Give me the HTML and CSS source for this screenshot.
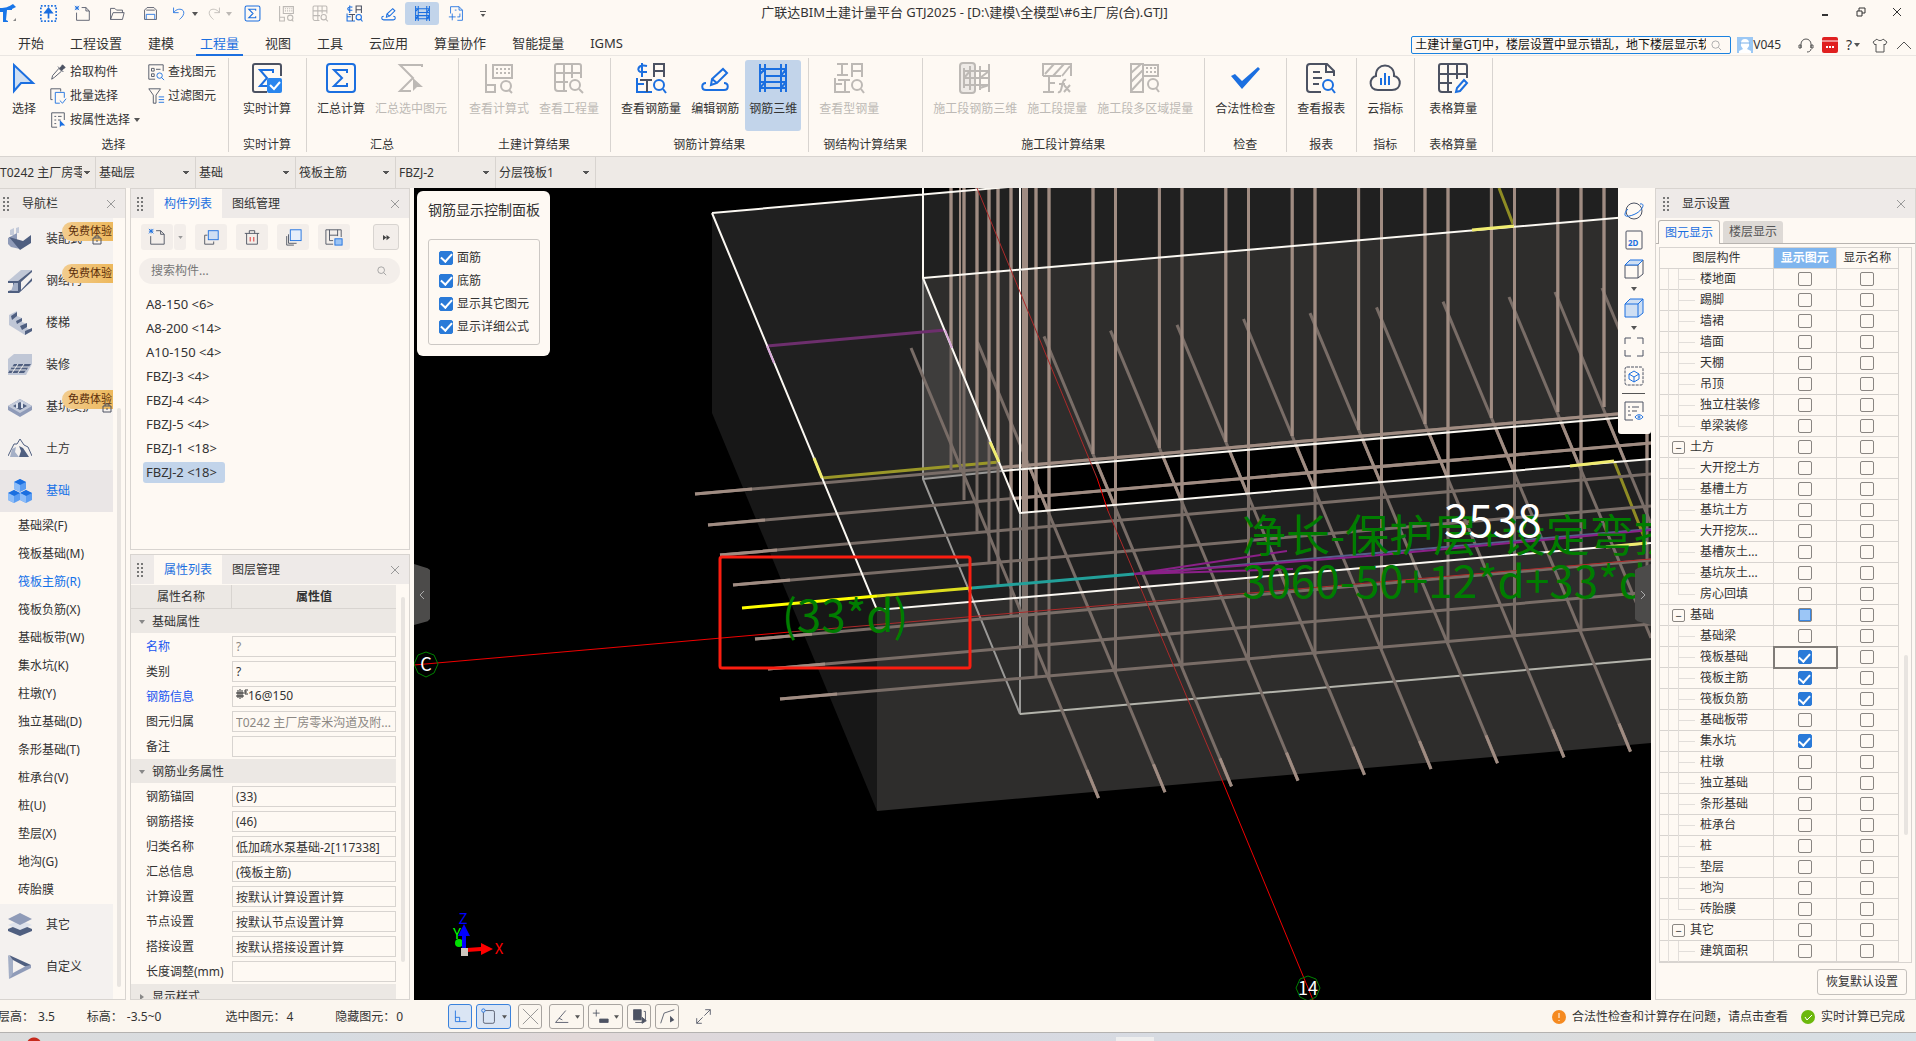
FILE: index.html
```html
<!DOCTYPE html>
<html lang="zh-CN">
<head>
  <meta charset="UTF-8">
  <meta name="viewport" content="width=device-width, initial-scale=1.0">
  <title>广联达BIM土建计量平台 GTJ2025</title>
  <link rel="stylesheet" href="styles.css">
</head>
<body>
  <!-- shared icons -->
  <svg class="sprite" aria-hidden="true">
    <symbol id="i-sum" viewBox="0 0 32 32"><rect x="2" y="2" width="28" height="28" rx="3"/><path d="M22 11V8H9l8 8-8 8h13v-3"/></symbol>
    <symbol id="i-formula" viewBox="0 0 32 32"><path d="M3 2v28h9v-7H3M10 3h19v13H10z"/><path d="M13 7h14M13 11h14" stroke-dasharray="2 2"/><circle cx="23" cy="24" r="5"/><path d="M26 28l3 3"/></symbol>
    <symbol id="i-grid" viewBox="0 0 32 32"><path d="M14 29H5a3 3 0 0 1-3-3V4a2 2 0 0 1 2-2h22a2 2 0 0 1 2 2v12M2 11h26M2 20h13M11 2v27M19 2v14"/><circle cx="22" cy="23" r="5"/><path d="M26 27l4 4"/></symbol>
    <symbol id="i-rebarqty" viewBox="0 0 32 32"><path d="M7 1v14M12 4C2 2 1 10 7 10h5M2 16v14h15M2 22h7"/><path class="dk" d="M19 15V2h10v13M19 9h10M12 18v12M5 18h12"/><circle cx="24" cy="23" r="5"/><path d="M28 27l3 4"/></symbol>
    <symbol id="i-edit" viewBox="0 0 32 32"><path d="M12 23l1-6L24 7l4 4-10 10-6 2zM13 17l5 4M7 21c-5 0-5 7 0 7h18c5 0 5-7 0-7"/></symbol>
    <symbol id="i-rebar3d" viewBox="0 0 32 32"><path d="M3 2v28M8 2v28M24 2v28M29 2v28M3 7h26M8 14h21M3 20h26M3 26h26M3 12l5-5M3 26l5-6M24 14l5-7M24 26l5-6"/></symbol>
    <symbol id="i-grip" viewBox="0 0 8 16"><path d="M1 1h2v2H1zM5 1h2v2H5zM1 5h2v2H1zM5 5h2v2H5zM1 9h2v2H1zM5 9h2v2H5zM1 13h2v2H1zM5 13h2v2H5z"/></symbol>
    <symbol id="i-x" viewBox="0 0 10 10"><path d="M1 1l8 8M9 1l-8 8"/></symbol>
    <symbol id="i-caret" viewBox="0 0 6 4"><path d="M0 0h6L3 4z"/></symbol>
    <symbol id="i-new" viewBox="0 0 20 20"><path d="M9 3h5l4 4v11H3V9M14 3v4h4"/><path class="bl" d="M1 1l5 5M6 1L1 6M1 3.5h5M3.5 1v5"/></symbol>
    <symbol id="i-lock" viewBox="0 0 10 11"><path d="M1 4h8v6H1zM3 4V2h4v2M5 6v2"/></symbol>
  </svg>

  <header class="titlebar">
    <svg class="logo" viewBox="0 0 16 18"><path d="M0 4c6 0 8-1 13-4l3 3-4 2v1l-5 0-1 10 2 1v1H3V8H0z" fill="#1976e8"/><path d="M16 14v3h-3z" fill="#888"/></svg>
    <div class="quick">
      <button aria-label="上传"><svg class="ic bl" viewBox="0 0 20 20"><rect x="1" y="1" width="18" height="18" stroke-width="2" stroke-dasharray="2 2"/><path d="M10 16V8M6 9l4-5 4 5z" fill="#1b6fe0" stroke-width="2"/></svg></button>
      <button aria-label="新建"><svg class="ic dk"><use href="#i-new"/></svg></button>
      <button aria-label="打开"><svg class="ic dk" viewBox="0 0 20 20"><path d="M3 17V4h5l2 2h7v3M3 17L6 9h13l-2 8z"/></svg></button>
      <button aria-label="保存"><svg class="ic dk" viewBox="0 0 20 20"><path d="M3 17V6l3-3h8l3 3v11zM5 6h10"/><path class="bl" d="M5 17v-6h10v6"/></svg></button>
      <button aria-label="撤销"><svg class="ic bl" viewBox="0 0 20 20"><path d="M3 3v6h6M3 9c4-6 13-5 12 1-1 4-3 5-5 7"/></svg><svg class="caret"><use href="#i-caret"/></svg></button>
      <button aria-label="恢复" class="off"><svg class="ic" viewBox="0 0 20 20"><path d="M17 3v6h-6M17 9C13 3 4 4 5 10c1 4 3 5 5 7"/></svg><svg class="caret"><use href="#i-caret"/></svg></button>
      <button aria-label="汇总计算"><svg class="ic bl"><use href="#i-sum"/></svg></button>
      <button aria-label="查看计算式" class="off"><svg class="ic"><use href="#i-formula"/></svg></button>
      <button aria-label="查看工程量" class="off"><svg class="ic"><use href="#i-grid"/></svg></button>
      <button aria-label="查看钢筋量"><svg class="ic bl"><use href="#i-rebarqty"/></svg></button>
      <button aria-label="编辑钢筋"><svg class="ic bl"><use href="#i-edit"/></svg></button>
      <button aria-label="钢筋三维" class="on"><svg class="ic bl"><use href="#i-rebar3d"/></svg></button>
      <button aria-label="导出"><svg class="ic bl" viewBox="0 0 20 20"><path d="M3 10V2h10l4 4v12h-6M13 2v4h4M1 14h8M5 10v8M8 6h2M14 10v4h-3"/></svg></button>
      <button aria-label="自定义" class="more"><svg class="caret"><use href="#i-caret"/></svg></button>
    </div>
    <h1>广联达BIM土建计量平台 GTJ2025 - [D:\建模\全模型\#6主厂房(合).GTJ]</h1>
    <div class="winctl">
      <button aria-label="最小化"><svg viewBox="0 0 10 10"><path d="M2 8h6" stroke-width="2"/></svg></button>
      <button aria-label="还原"><svg viewBox="0 0 10 10"><path d="M1 4h5v5H1zM3 4V1h6v5H6"/></svg></button>
      <button aria-label="关闭"><svg><use href="#i-x"/></svg></button>
    </div>
  </header>

  <nav class="tabs">
    <div class="tablist">
      <a href="#">开始</a><a href="#">工程设置</a><a href="#">建模</a><a href="#" class="active">工程量</a><a href="#">视图</a><a href="#">工具</a><a href="#">云应用</a><a href="#">算量协作</a><a href="#">智能提量</a><a href="#">IGMS</a>
    </div>
    <div class="account">
      <div class="help-search">
        <input type="text" aria-label="搜索帮助" value="土建计量GTJ中，楼层设置中显示错乱，地下楼层显示软件">
        <svg viewBox="0 0 12 12"><circle cx="5" cy="5" r="4"/><path d="M8 8l3 3"/></svg>
      </div>
      <svg class="avatar" viewBox="0 0 16 16"><path fill="#9cc8f4" d="M0 0h16v16H0z"/><path fill="#fff" d="M4 6a4 4 0 0 1 8 0v3l-2 3 4 2v2H2v-2l4-2-2-3z"/><path d="M3 6h10" stroke="#7ab0e8"/></svg>
      <span class="user">V045</span>
      <svg class="acc" viewBox="0 0 16 16"><path d="M3 11V7a5 5 0 0 1 10 0v4M1 8v3h2V8zM13 8v3h2V8zM13 12c0 2-2 3-4 3"/></svg>
      <svg class="acc" viewBox="0 0 16 16"><rect x="0" y="0" width="16" height="16" rx="2" fill="#e02020" stroke="none"/><path d="M0 4h16" stroke="#fff"/><path d="M4 10h8" stroke="#fff" stroke-width="2" stroke-dasharray="2 1"/></svg>
      <button class="help">?<svg class="caret"><use href="#i-caret"/></svg></button>
      <svg class="acc" viewBox="0 0 16 16"><path d="M5 2L1 5l2 3 1-1v8h8V7l1 1 2-3-4-3c-1 2-5 2-6 0z"/></svg>
      <svg class="acc" viewBox="0 0 16 16"><path d="M1 12l7-7 7 7"/></svg>
    </div>
  </nav>

  <section class="ribbon">
    <div class="group">
      <div class="tools">
        <button class="pick"><svg class="big bl" viewBox="0 0 32 32"><path d="M6 3v26l7-8h12z" fill="#cfdff3"/></svg>选择</button>
        <div class="stack">
          <button><svg class="ic dk" viewBox="0 0 20 20"><path d="M3 18l1-4 7-8 3 3-8 7z"/><path d="M10 4l6 6M12 6l3-4 3 3-4 3z" fill="#4c5262"/></svg>拾取构件</button>
          <button><svg class="ic bl" viewBox="0 0 20 20"><path class="dk" d="M4 14H2V2h11v3"/><path d="M17 12V6H7v12h5M12 15l3 3 4-5"/></svg>批量选择</button>
          <button><svg class="ic dk" viewBox="0 0 20 20"><path d="M9 18H3V2h14v8M6 6h2M10 6h4M6 10h2M10 10h3M6 14h2"/><path d="M12 10v8l2-2h4z" fill="#1b6fe0" stroke="none"/></svg>按属性选择<svg class="caret"><use href="#i-caret"/></svg></button>
        </div>
        <div class="stack">
          <button><svg class="ic dk" viewBox="0 0 20 20"><path d="M9 18H2V2h16v7M5 6h3v3H5zM10 7h5M5 12h3v3H5z"/><g class="bl"><circle cx="14" cy="14" r="3"/><path d="M16 16l3 3"/></g></svg>查找图元</button>
          <button><svg class="ic dk" viewBox="0 0 20 20"><path d="M2 2h13L10 9v9H7V9z"/><path class="bl" d="M13 11h6M13 14h6M13 17h6"/></svg>过滤图元</button>
        </div>
      </div>
      <p>选择</p>
    </div>
    <div class="group">
      <div class="tools mid"><button><svg class="big dk" viewBox="0 0 32 32"><path d="M16 30H4a2 2 0 0 1-2-2V4a2 2 0 0 1 2-2h24a2 2 0 0 1 2 2v10"/><path class="bl" d="M22 11V8H9l7 8-7 8h7"/><rect x="16" y="16" width="15" height="15" rx="2" fill="#2a86ee" stroke="none"/><path d="M19 23l4 4 6-7" stroke="#fff"/></svg>实时计算</button></div>
      <p>实时计算</p>
    </div>
    <div class="group">
      <div class="tools">
        <button><svg class="big bl"><use href="#i-sum"/></svg>汇总计算</button>
        <button class="off"><svg class="big" viewBox="0 0 32 32"><path d="M27 5V3H5l13 13L5 29h11"/><path d="M18 16v13l4-4h6z" fill="#bdb9b5" stroke="none"/></svg>汇总选中图元</button>
      </div>
      <p>汇总</p>
    </div>
    <div class="group">
      <div class="tools">
        <button class="off"><svg class="big"><use href="#i-formula"/></svg>查看计算式</button>
        <button class="off"><svg class="big"><use href="#i-grid"/></svg>查看工程量</button>
      </div>
      <p>土建计算结果</p>
    </div>
    <div class="group">
      <div class="tools">
        <button><svg class="big bl"><use href="#i-rebarqty"/></svg>查看钢筋量</button>
        <button><svg class="big bl"><use href="#i-edit"/></svg>编辑钢筋</button>
        <button class="on"><svg class="big bl"><use href="#i-rebar3d"/></svg>钢筋三维</button>
      </div>
      <p>钢筋计算结果</p>
    </div>
    <div class="group">
      <div class="tools"><button class="off"><svg class="big" viewBox="0 0 32 32"><path d="M4 2h11M4 13h11M9 2v11M2 16v14h15M2 22h7M12 18v12M5 18h12M19 15V2h10v13M19 9h10"/><circle cx="24" cy="23" r="5"/><path d="M28 27l3 4"/></svg>查看型钢量</button></div>
      <p>钢结构计算结果</p>
    </div>
    <div class="group">
      <div class="tools">
        <button class="off"><svg class="big" viewBox="0 0 32 32"><rect x="1" y="1" width="15" height="30" rx="3" fill="#eeeae6"/><path d="M5 6v20M11 4v24M21 4v24M30 2v28M5 9h25M5 16h25M5 23h25M5 16l6-7M21 16l9-7M21 26l9-3"/></svg>施工段钢筋三维</button>
        <button class="off"><svg class="big" viewBox="0 0 32 32"><path d="M2 14V2h28v12M2 14h18M4 12L13 2M12 14L23 2M21 14l8-10M8 14v16M2 30h11M8 21h6M17 30c5 2 3-14 8-12M18 22h6M23 23l6 7M29 23l-6 7"/></svg>施工段提量</button>
        <button class="off"><svg class="big" viewBox="0 0 32 32"><path d="M14 30H2V2h12zM2 11l10-9M2 20L14 8M2 29l12-13M14 3h15v11H14"/><path d="M17 6h12M17 10h12" stroke-dasharray="2 2"/><circle cx="24" cy="22" r="5"/><path d="M27 26l3 4"/></svg>施工段多区域提量</button>
      </div>
      <p>施工段计算结果</p>
    </div>
    <div class="group">
      <div class="tools"><button><svg class="big" viewBox="0 0 32 32"><path d="M2 14l4-2 7 7L29 5l2 2-18 20z" fill="#1b6fe0" stroke="none"/></svg>合法性检查</button></div>
      <p>检查</p>
    </div>
    <div class="group">
      <div class="tools"><button><svg class="big dk" viewBox="0 0 32 32"><path d="M16 30H5a3 3 0 0 1-3-3V5a3 3 0 0 1 3-3h17l7 7v5M21 2v8h8M8 10h7M8 16h9M8 22h6"/><g class="bl"><circle cx="23" cy="23" r="5"/><path d="M27 27l3 4"/></g></svg>查看报表</button></div>
      <p>报表</p>
    </div>
    <div class="group">
      <div class="tools"><button><svg class="big dk" viewBox="0 0 32 32"><path d="M9 28C-1 28 0 15 7 14 6 0 26 0 25 14c8 1 8 14-2 14z"/><path class="bl" d="M12 16v7M16 11v12M20 14v9"/></svg>云指标</button></div>
      <p>指标</p>
    </div>
    <div class="group">
      <div class="tools mid"><button><svg class="big dk" viewBox="0 0 32 32"><path d="M15 30H5a3 3 0 0 1-3-3V4a2 2 0 0 1 2-2h24a2 2 0 0 1 2 2v12M2 12h28M2 21h13M11 2v28M20 2v15"/><path class="bl" d="M19 30l1-4 7-8 3 3-7 8z"/></svg>表格算量</button></div>
      <p>表格算量</p>
    </div>
  </section>

  <div class="combos">
    <select class="first" aria-label="工程"><option>T0242 主厂房零米沟道及附属</option></select>
    <select aria-label="楼层"><option>基础层</option></select>
    <select aria-label="类别"><option>基础</option></select>
    <select aria-label="构件类型"><option>筏板主筋</option></select>
    <select aria-label="构件"><option>FBZJ-2</option></select>
    <select aria-label="分层"><option>分层筏板1</option></select>
  </div>

  <main class="work">
    <aside class="panel navpanel">
      <div class="head"><svg class="grip"><use href="#i-grip"/></svg><h2>导航栏</h2><button class="close" aria-label="关闭导航栏"><svg><use href="#i-x"/></svg></button></div>
      <div class="navwrap">
        <div class="navlist">
          <button class="cat"><svg viewBox="0 0 24 24"><path fill="#8f9bb8" d="M0 11l9-5v10l3 6-9-2-3-3z"/><path fill="#4f5f80" d="M1 10l14 4 8-6v8l-11 7z"/><path fill="#c3cad9" d="M2 3l4-2v7H2zM8 1l3-1v6H8z"/></svg>装配式<em>免费体验</em><svg class="lock"><use href="#i-lock"/></svg></button>
          <button class="cat"><svg viewBox="0 0 24 24"><path fill="#c0c7d6" d="M0 12L13 1h11L10 12z"/><path fill="#4f5f80" d="M10 12L24 1v2L13 13v8L24 9v3L11 24H0v-2l5-1v-7H0v-2z"/><path fill="#a4afc6" d="M6 14h4v8H3z"/></svg>钢结构<em>免费体验</em></button>
          <button class="cat"><svg viewBox="0 0 24 24"><path fill="#c0c7d6" d="M1 4l8-4v5l5 2v4l5 2v4l5 3-7 4L1 14z"/><path fill="#4f5f80" d="M3 5l6-4v4l-5 4zM8 10l6-3v3l-5 3zM12 15l7-3v4l-5 3zM17 20l7-3v3l-7 4z"/></svg>楼梯</button>
          <button class="cat"><svg viewBox="0 0 24 24"><path fill="#c0c7d6" d="M0 6l6-5h18v10l-6 11H0z"/><path fill="#4f5f80" d="M6 11h17l-7 9H0z"/><path d="M4 14h17M2 17h16M10 11l-6 9M16 11l-6 9" stroke="#eee" fill="none"/></svg>装修</button>
          <button class="cat"><svg viewBox="0 0 24 24"><path fill="#8f9bb8" d="M0 11l12-7 12 7v4l-12 7-12-7z"/><path fill="#c3cad9" d="M0 11l12-7 12 7-12 7z"/><path fill="#4f5f80" d="M5 11l7-4 7 4-7 4z"/><path fill="#dde2ec" d="M8 8h2v5H8zM13 7h2v6h-2z"/></svg>基坑支护<em>免费体验</em><svg class="lock far"><use href="#i-lock"/></svg></button>
          <button class="cat"><svg viewBox="0 0 24 24"><path d="M0 19l6-12h3l3-5 4 6 4 2 4 9" fill="none" stroke="#4f5f80"/><path fill="#4f5f80" d="M11 9l4 2 6 9H11l2-6z"/><path fill="#a4afc6" d="M4 12l4-2-1 5 4 5H2z"/></svg>土方</button>
          <button class="cat sel"><svg viewBox="0 0 24 24"><path fill="#5b9df2" d="M6 3l6-3 6 3v7l-6 3-6-3zM0 14l6-3 6 3v7l-6 3-6-3zM12 14l6-3 6 3v7l-6 3-6-3z"/><path fill="#1b6fe0" d="M6 3l6-3 6 3-6 3zM0 14l6-3 6 3-6 3zM12 14l6-3 6 3-6 3z"/><path fill="#8dbcf7" d="M6 3l6 3v7l-6-3zM0 14l6 3v7l-6-3zM12 14l6 3v7l-6-3z"/></svg>基础</button>
          <ul>
            <li>基础梁(F)</li><li>筏板基础(M)</li><li class="sel">筏板主筋(R)</li><li>筏板负筋(X)</li><li>基础板带(W)</li><li>集水坑(K)</li><li>柱墩(Y)</li><li>独立基础(D)</li><li>条形基础(T)</li><li>桩承台(V)</li><li>桩(U)</li><li>垫层(X)</li><li>地沟(G)</li><li>砖胎膜</li>
          </ul>
          <button class="cat"><svg viewBox="0 0 24 24"><path fill="#4f5f80" d="M0 16l12-5 12 5v2l-12 5-12-5z"/><path fill="#dfe3ec" d="M0 12l12-5 12 5-12 5z"/><path fill="#8f9bb8" d="M0 6l12-6 12 6-12 6z"/></svg>其它</button>
          <button class="cat"><svg viewBox="0 0 24 24"><path fill="#a4afc6" d="M0 0l5 4v15l-4 5z"/><path fill="#4f5f80" d="M1 0l22 10-3 3L5 5z"/><path fill="#8f9bb8" d="M23 10v3L1 24l4-6 13-7z"/></svg>自定义</button>
        </div>
        <div class="bar navbar"></div>
      </div>
    </aside>

    <div class="middle">
      <section class="panel complist">
        <div class="head"><svg class="grip"><use href="#i-grip"/></svg><button class="tab active">构件列表</button><button class="tab">图纸管理</button><button class="close" aria-label="关闭构件列表"><svg><use href="#i-x"/></svg></button></div>
        <div class="toolrow">
          <div class="split"><button aria-label="新建构件"><svg class="ic dk"><use href="#i-new"/></svg></button><button class="drop" aria-label="更多新建"><svg class="caret"><use href="#i-caret"/></svg></button></div>
          <button aria-label="复制"><svg class="ic dk" viewBox="0 0 20 20"><path d="M6 8H3v10h10v-3"/><rect class="bl" x="7" y="3" width="11" height="10" fill="#cfdff3"/></svg></button>
          <button aria-label="删除"><svg class="ic dk" viewBox="0 0 20 20"><path d="M2 6h16M4 6v12h12V6M7 6V3h6v3"/><path d="M8 10v5M12 10v5" stroke="#d22"/></svg></button>
          <button aria-label="层间复制"><svg class="ic dk" viewBox="0 0 20 20"><path d="M5 7v10h9M3 9v10h8"/><rect class="bl" x="7" y="2" width="12" height="12" fill="#e6eefa"/></svg></button>
          <button aria-label="存档"><svg class="ic dk" viewBox="0 0 20 20"><path d="M9 18H1V2h17v8M5 2v12M14 2v7M5 8h9M5 14h4"/><rect class="bl" x="11" y="12" width="8" height="7" fill="#9cc4f4"/></svg></button>
          <button class="expand" aria-label="展开"><svg viewBox="0 0 10 8"><path d="M1 1v6l4-3zM5 1v6l4-3z" fill="#444"/></svg></button>
        </div>
        <div class="search"><input type="text" placeholder="搜索构件..." aria-label="搜索构件"><svg viewBox="0 0 12 12"><circle cx="5" cy="5" r="4"/><path d="M8 8l3 3"/></svg></div>
        <ul class="items">
          <li>A8-150 &lt;6&gt;</li><li>A8-200 &lt;14&gt;</li><li>A10-150 &lt;4&gt;</li><li>FBZJ-3 &lt;4&gt;</li><li>FBZJ-4 &lt;4&gt;</li><li>FBZJ-5 &lt;4&gt;</li><li>FBZJ-1 &lt;18&gt;</li><li class="sel">FBZJ-2 &lt;18&gt;</li>
        </ul>
      </section>
      <section class="panel props">
        <div class="head"><svg class="grip"><use href="#i-grip"/></svg><button class="tab active">属性列表</button><button class="tab">图层管理</button><button class="close" aria-label="关闭属性列表"><svg><use href="#i-x"/></svg></button></div>
        <div class="propwrap">
          <div class="proplist">
            <div class="prophead"><span>属性名称</span><b>属性值</b></div>
            <h3><svg class="caret"><use href="#i-caret"/></svg>基础属性</h3>
            <div class="row key"><label for="p1">名称</label><input id="p1" class="dim" value="?"></div>
            <div class="row"><label for="p2">类别</label><input id="p2" value="?"></div>
            <div class="row key"><label for="p3">钢筋信息</label><div class="field"><svg viewBox="0 0 12 12"><path d="M4 0v10M2 1v8M6 1v8M0 4h8M0 7h8" stroke="#333" fill="none"/><path d="M12 1H9v4h3M9 3h2" stroke="#333" fill="none"/></svg><input id="p3" value="16@150"></div></div>
            <div class="row"><label for="p4">图元归属</label><input id="p4" class="dim" value="T0242 主厂房零米沟道及附..."></div>
            <div class="row"><label for="p5">备注</label><input id="p5"></div>
            <h3><svg class="caret"><use href="#i-caret"/></svg>钢筋业务属性</h3>
            <div class="row"><label for="p6">钢筋锚固</label><input id="p6" value="(33)"></div>
            <div class="row"><label for="p7">钢筋搭接</label><input id="p7" value="(46)"></div>
            <div class="row"><label for="p8">归类名称</label><input id="p8" value="低加疏水泵基础-2[117338]"></div>
            <div class="row"><label for="p9">汇总信息</label><input id="p9" value="(筏板主筋)"></div>
            <div class="row"><label for="p10">计算设置</label><input id="p10" value="按默认计算设置计算"></div>
            <div class="row"><label for="p11">节点设置</label><input id="p11" value="按默认节点设置计算"></div>
            <div class="row"><label for="p12">搭接设置</label><input id="p12" value="按默认搭接设置计算"></div>
            <div class="row"><label for="p13">长度调整(mm)</label><input id="p13"></div>
            <h3 class="shut"><svg class="caret"><use href="#i-caret"/></svg>显示样式</h3>
          </div>
          <div class="bar propbar"></div>
        </div>
      </section>
    </div>

    <section class="view">
      <svg class="scene" viewBox="414 188 1237 812" preserveAspectRatio="xMinYMin slice">
        <clipPath id="above"><path d="M923 188V278L1020 513L1651 459V188z"/></clipPath>
        <clipPath id="gap"><path d="M1002 471L1651 415V459L1020 513z"/></clipPath>
        <!-- slab faces -->
        <path class="face" fill="#171717" d="M712 213L877 610V811L712 413z"/>
        <path class="face" fill="#202020" d="M712 213L1008 187H1651V543L877 610z"/>
        <path class="face" fill="#2e2d2c" d="M877 610L1651 543V743L877 811z"/>
        <path class="face" fill="#2e2d2c" d="M923 278L1651 215V415L1002 471z"/>
        <path class="face" fill="#3e3d3c" d="M923 278L1002 471L923 479z"/>
        <path class="face" fill="#000" d="M1002 471L1651 415V459L1020 513z"/>
        <g fill="none" stroke-width="2">
          <path stroke="#9a9997" d="M923 278V479L1020 714V513M923 479L1002 471"/>
          <path stroke="#b4b4ac" d="M1020 714L1651 659"/>
          <path stroke="#6d2f6d" stroke-width="3" d="M767 346L945 330"/>
          <path stroke="#9a9728" stroke-width="3" d="M822 478L999 462"/>
          <path stroke="#8f8c24" stroke-width="3" d="M1499 188L1513 224M1614 461L1646 542"/>
        </g>
        <!-- rebar, filled in by script.js -->
        <g id="rebar-dim" stroke="#796d67" stroke-width="3"></g>
        <g id="rebar-lit" stroke="#a08c82" stroke-width="3"></g>
        <g id="rebar-above" stroke="#a08c82" stroke-width="3" clip-path="url(#above)"></g>
        <g id="rebar-gap" stroke="#a08c82" stroke-width="3" clip-path="url(#gap)"></g>
        <g fill="none" stroke="#fbf8f2" stroke-width="2">
          <path d="M712 213L877 610L1651 543M712 213L1008 187M923 188V278L1020 513L1651 459M923 278L1651 215M1002 471L1651 415M1020 188V513"/>
          <path stroke="#f0ec70" d="M814 458L822 478M990 442L999 462" stroke-width="3"/>
          <path stroke="#f0ec70" d="M1472 230L1514 226M1570 466L1614 461M1606 547L1647 543" stroke-width="3"/>
          <path stroke="#d8a8d8" d="M767 346L774 363M945 330L952 348"/>
        </g>
        <!-- grid axes -->
        <g fill="none" stroke="#f00000">
          <path d="M414 665L790 632M1097 478L1108 511M1222 780L1313 1000"/>
          <path stroke="#ad2a2a" d="M790 632L1651 559M977 188L1097 478M1108 511L1222 780"/>
        </g>
        <!-- selected bar -->
        <g fill="none" stroke-width="3">
          <path stroke="#ffff00" d="M742 608L877 596"/>
          <path stroke="#dede20" d="M877 596L972 588"/>
          <path stroke="#22a09a" d="M972 588L1134 574"/>
          <path stroke="#56608c" stroke-width="2" d="M1134 574L1651 529"/>
          <path stroke="#8a2088" stroke-width="2" d="M1287 551L1134 574L1293 569M1134 574L1380 555L1651 530"/>
        </g>
        <g class="dims">
          <text x="782" y="632">(33*d)</text>
          <text x="1242" y="552">净长-保护层+设定弯折</text>
          <text x="1242" y="598">3060-50+12*d+33*d</text>
          <text class="white" x="1444" y="537">3538</text>
        </g>
        <rect x="720" y="557" width="250" height="111" rx="2" fill="none" stroke="#fb1d10" stroke-width="3"/>
        <g class="axis">
          <path d="M426 652l8 3 4 9-4 9-8 4-8-4-4-9 4-9zM1308 976l8 3 4 9-4 9-8 4-8-4-4-9 4-9z"/>
          <text x="426" y="671">C</text><text x="1308" y="995">14</text>
        </g>
        <g class="gizmo">
          <circle cx="459" cy="943" r="4" fill="#00e000"/>
          <path fill="#00f" d="M462 949V936h-4l6-12 6 12h-4v13z"/>
          <path fill="#f00" d="M467 948l14-1v-4l12 6-12 6v-4l-14 1z"/>
          <path fill="#ccc6be" d="M461 948h7v8h-7z"/>
          <text x="463" y="924" fill="#00f">Z</text><text x="457" y="939" fill="#0f0">Y</text><text x="499" y="954" fill="#f00">X</text>
        </g>
      </svg>
      <div class="ctrl">
        <h2>钢筋显示控制面板</h2>
        <fieldset>
          <label><input type="checkbox" checked>面筋</label>
          <label><input type="checkbox" checked>底筋</label>
          <label><input type="checkbox" checked>显示其它图元</label>
          <label><input type="checkbox" checked>显示详细公式</label>
        </fieldset>
      </div>
      <button class="handle left" aria-label="收起左侧"><svg viewBox="0 0 6 10"><path d="M5 1L1 5l4 4"/></svg></button>
      <button class="handle right" aria-label="收起右侧"><svg viewBox="0 0 6 10"><path d="M1 1l4 4-4 4"/></svg></button>
      <div class="viewtools">
        <button aria-label="动态观察"><svg class="ic dk" viewBox="0 0 20 20"><circle cx="10" cy="10" r="8"/><path class="bl" d="M16 3c6-1 2 6-3 9S0 17 1 13c0-2 2-4 3-5"/></svg></button>
        <button aria-label="二维"><svg class="ic dk" viewBox="0 0 20 20"><rect x="2" y="1" width="16" height="18" rx="1"/><text x="4" y="16">2D</text></svg></button>
        <button class="menu" aria-label="俯视"><svg class="ic dk" viewBox="0 0 20 20"><path d="M1 6h13v13H1zM14 19l5-4V1"/><path class="bl" d="M1 6l5-5h13l-5 5z" fill="#cfdff3"/></svg><svg class="caret"><use href="#i-caret"/></svg></button>
        <button class="menu" aria-label="实体"><svg class="ic bl" viewBox="0 0 20 20"><path d="M1 6l5-5h13v14l-5 4H1zM1 6h13v13M14 6l5-5" fill="#cfdff3"/></svg><svg class="caret"><use href="#i-caret"/></svg></button>
        <button aria-label="全屏"><svg class="ic dk" viewBox="0 0 20 20"><path d="M1 7V1h6M13 1h6v6M19 13v6h-6M7 19H1v-6"/></svg></button>
        <button aria-label="局部三维"><svg class="ic dk" viewBox="0 0 20 20"><rect x="1" y="1" width="18" height="18" rx="2" stroke-dasharray="3 1"/><path class="bl" d="M10 5l5 3v5l-5 3-5-3V8zM5 8l5 3 5-3M10 11v5"/></svg></button>
        <hr>
        <button aria-label="显示设置"><svg class="ic dk" viewBox="0 0 20 20"><path d="M9 19H1V1h18v10M4 6h2M8 6h7M4 10h2M8 10h5M4 14h3"/><path class="bl" d="M11 16c2-3 6-3 8 0-2 3-6 3-8 0z"/><circle class="bl" cx="15" cy="16" r="1"/></svg></button>
      </div>
    </section>

    <aside class="panel display">
      <div class="head"><svg class="grip"><use href="#i-grip"/></svg><h2>显示设置</h2><button class="close" aria-label="关闭显示设置"><svg><use href="#i-x"/></svg></button></div>
      <div class="subtabs"><button class="active">图元显示</button><button>楼层显示</button></div>
      <div class="layers">
        <table>
          <thead><tr><th>图层构件</th><th class="hl">显示图元</th><th>显示名称</th></tr></thead>
          <tbody id="layer-rows"></tbody>
        </table>
        <div class="bar layerbar"></div>
      </div>
      <button class="reset">恢复默认设置</button>
    </aside>
  </main>

  <footer class="status">
    <div class="facts"><span>层高：</span><span class="num">3.5</span><span>标高：</span><span class="num wide">-3.5~0</span><span>选中图元：</span><span class="num count">4</span><span>隐藏图元：</span><span class="num">0</span></div>
    <div class="snap">
      <button class="on" aria-label="正交"><svg class="ic bl" viewBox="0 0 20 20"><path d="M4 3v13h13M4 11h5v5"/></svg></button>
      <button class="on two" aria-label="捕捉"><svg class="ic dk" viewBox="0 0 20 20"><rect x="4" y="3" width="13" height="15" rx="2"/><circle class="bl" cx="4" cy="3" r="2" fill="#d6e2f3"/></svg><svg class="caret"><use href="#i-caret"/></svg></button>
      <button class="gap" aria-label="交点"><svg class="ic" viewBox="0 0 20 20"><path d="M1 1l18 18M19 1L1 19" stroke="#888"/></svg></button>
      <button class="two gap" aria-label="角度"><svg class="ic dk" viewBox="0 0 20 20"><path d="M3 17L15 3M3 17h15M7 12l4 2"/></svg><svg class="caret"><use href="#i-caret"/></svg></button>
      <button class="two" aria-label="偏移"><svg class="ic dk" viewBox="0 0 20 20"><path d="M1 6h8M5 2v8"/><path d="M9 13h10v4H9z" fill="#4c5262"/></svg><svg class="caret"><use href="#i-caret"/></svg></button>
      <button aria-label="选择图元"><svg class="ic dk" viewBox="0 0 20 20"><path d="M3 2h9v12H3z" fill="#4c5262"/><path d="M5 17h8M15 4h2v10"/><path d="M13 11v7l5-3z" fill="#4c5262"/></svg></button>
      <button aria-label="折线"><svg class="ic dk" viewBox="0 0 20 20"><path d="M2 18L6 6l12-4"/><path d="M13 9v8l5-3z" fill="#4c5262" stroke="none"/></svg></button>
      <button class="bare" aria-label="全屏显示"><svg class="ic dk" viewBox="0 0 20 20"><path d="M12 2h6v6M18 2l-7 7M8 18H2v-6M2 18l7-7"/></svg></button>
    </div>
    <div class="notes">
      <svg viewBox="0 0 14 14"><circle cx="7" cy="7" r="7" fill="#f58a20"/><path d="M7 3v5M7 10v1" stroke="#fff"/></svg><span>合法性检查和计算存在问题，请点击查看</span>
      <svg viewBox="0 0 14 14"><circle cx="7" cy="7" r="7" fill="#6cb80c"/><path d="M4 7l2 3 5-5" stroke="#fff" fill="none"/></svg><span>实时计算已完成</span>
    </div>
  </footer>
  <div class="taskbar"></div>
  <script src="script.js"></script>
</body>
</html>
```

FILE: styles.css
```css
:root {
  --bg: #fef9f3;
  --head: #eeeae8;
  --line: #d8d4d0;
  --text: #333333;
  --blue: #1b6fe0;
  --sel: #c2d4ea;
  --dark: #4c5262;
  --off: #bdb9b5;
}
* { box-sizing: border-box; margin: 0; padding: 0; }
html, body { height: 100%; }
body {
  display: flex;
  flex-direction: column;
  overflow: hidden;
  background: var(--bg);
  color: var(--text);
  font: 12px/18px "Noto Sans", "Noto Sans CJK SC", sans-serif;
}
button, input, select { font: inherit; color: inherit; background: none; border: none; outline: none; }
button { white-space: nowrap; }
ul { list-style: none; }
a { color: inherit; text-decoration: none; }
h1, h2, h3 { font-size: 12px; font-weight: normal; }
svg { display: block; flex: none; fill: none; stroke: currentColor; }
.sprite { position: absolute; width: 0; height: 0; }
.ic { width: 18px; height: 18px; }
.big { width: 32px; height: 32px; stroke-width: 2; }
.ic use { stroke-width: 1; }
.bl { stroke: var(--blue); }
.dk { stroke: var(--dark); }
.caret { width: 6px; height: 4px; fill: #555; stroke: none; }
.off { color: var(--off); }
.off .caret { fill: var(--off); }

/* title bar */
.titlebar { display: flex; height: 28px; flex: none; align-items: flex-start; }
.logo { width: 16px; height: 18px; margin: 4px 15px 0 0; stroke: none; }
.quick { display: flex; flex: 1; padding-top: 2px; }
.quick button { width: 34px; height: 23px; display: flex; align-items: center; justify-content: center; gap: 4px; border-radius: 3px; }
.quick .ic { width: 17px; height: 19px; }
.quick .ic use { stroke-width: 2; }
.quick .ic use[href="#i-new"] { stroke-width: 1; }
.quick .on { background: var(--sel); }
.quick .more { width: 20px; }
.more .caret { border-top: 1px solid #555; height: 6px; padding-top: 2px; }
.titlebar h1 { font-size: 13px; line-height: 25px; margin-right: 9px; }
.winctl { flex: 1; display: flex; justify-content: flex-end; gap: 16px; padding: 2px 9px 0 0; }
.winctl button { width: 20px; height: 20px; display: grid; place-items: center; }
.winctl svg { width: 10px; height: 10px; }

/* menu tabs */
.tabs { display: flex; flex: none; height: 28px; justify-content: space-between; border-bottom: 1px solid #eae6e2; }
.tablist { display: flex; gap: 18px; padding-left: 14px; }
.tablist a { font-size: 13px; line-height: 30px; padding: 0 4px; height: 28px; }
.tablist .active { color: var(--blue); border-bottom: 2px solid var(--blue); }
.account { display: flex; align-items: center; padding: 6px 4px 0 0; height: 28px; }
.help-search { display: flex; align-items: center; width: 320px; height: 18px; border: 1px solid #1a82e0; border-radius: 2px; padding: 0 8px 0 3px; color: #111; }
.help-search input { flex: 1; min-width: 0; margin-right: 5px; height: 16px; }
.help-search svg { width: 11px; height: 11px; stroke: #aaa; }
.avatar { width: 16px; height: 16px; margin-left: 6px; stroke: none; }
.user { margin-right: 17px; }
.acc { width: 16px; height: 16px; margin-right: 8px; color: #555; }
.acc:last-child { margin-right: 0; }
.help { display: flex; align-items: center; gap: 2px; font-size: 14px; margin-right: 8px; width: 18px; }

/* ribbon */
.ribbon { display: flex; flex: none; height: 101px; border-bottom: 1px solid var(--line); padding-top: 2px; }
.group { display: flex; flex-direction: column; justify-content: space-between; height: 94px; border-right: 1px solid var(--line); }
.group > p { text-align: center; padding: 0 15px 0 14px; line-height: 14px; }
.tools { display: flex; gap: 2px; padding: 2px 7px 0 6px; }
.tools.mid { justify-content: center; }
.tools > button { display: flex; flex-direction: column; align-items: center; gap: 6px; height: 71px; padding: 2px 4px 0; border-radius: 3px; }
.tools > .on { background: var(--sel); }
.tools > .pick { padding: 2px 0 0; width: 36px; }
.stack { display: flex; flex-direction: column; padding-left: 5px; }
.stack + .stack { padding: 0 5px; }
.stack button { display: flex; align-items: center; gap: 3px; height: 24px; padding: 0; }
.stack .caret { margin-left: 1px; }

/* combo row */
.combos { display: flex; flex: none; height: 31px; background: #eeeae6; }
.combos select {
  width: 100px; padding: 0 18px 0 3px; appearance: none; border-right: 1px solid var(--line); border-radius: 0;
  background: linear-gradient(to bottom left, #555 50%, transparent 51%) 86px 14px / 3px 4px no-repeat,
    linear-gradient(to bottom right, #555 50%, transparent 51%) 89px 14px / 3px 4px no-repeat;
  background: conic-gradient(from -37deg at 50% 100%, #555 74deg, transparent 75deg) 87px 14px / 6px 4px no-repeat;
  text-overflow: clip;
}
.combos .first { width: 96px; padding: 0 13px 0 0; background-position: 84px 14px; }

/* docked panels */
.work { flex: 1; display: flex; gap: 4px; min-height: 0; }
.panel { border: 1px solid var(--line); display: flex; flex-direction: column; min-height: 0; overflow: hidden; }
.head { display: flex; flex: none; height: 29px; background: var(--head); align-items: center; padding-right: 9px; }
.grip { width: 8px; height: 16px; fill: #777; stroke: none; margin: 0 13px 0 5px; }
.close { margin-left: auto; width: 10px; height: 10px; color: #999; }
.close svg { width: 10px; height: 10px; }
.tab { height: 29px; padding: 0 10px; }
.tab.active { background: var(--bg); color: var(--blue); }
.bar { width: 4px; border-radius: 2px; background: #e8e4e0; flex: none; }

.navpanel { width: 126px; border-left: none; flex: none; }
.navpanel .grip { margin-left: 2px; margin-right: 12px; }
.navwrap { flex: 1; display: flex; min-height: 0; }
.navlist { width: 113px; background: #f4f1ef; overflow: hidden; }
.navbar { margin: 190px 0 12px 4px; }
.cat { position: relative; display: flex; align-items: center; width: 113px; height: 42px; padding-left: 8px; gap: 14px; overflow: hidden; }
.cat > svg { width: 24px; height: 24px; stroke: none; }
.cat.sel { background: #eae6e6; color: #4a86dc; }
.cat em { position: absolute; left: 62px; top: 4px; width: 51px; height: 19px; padding-left: 6px; border-radius: 10px 0 0 10px; background: linear-gradient(90deg, #f2cc8e, #edb85c); color: #5a2d0a; font-style: normal; font-size: 11px; text-align: left; }
.cat .lock { position: absolute; left: 92px; top: 16px; width: 10px; height: 11px; stroke: var(--dark); }
.cat .far { left: 102px; }
.navlist ul { background: var(--bg); }
.navlist li { height: 28px; line-height: 28px; padding-left: 18px; }
.navlist .sel { color: #1672e8; }

.middle { width: 280px; flex: none; display: flex; flex-direction: column; gap: 4px; }
.complist { flex: 362 1 0; }
.complist .tab, .props .tab { min-width: 68px; }
.middle .grip { margin: 0 10px 0 5px; }
.toolrow { display: flex; gap: 9px; padding: 6px 10px; }
.toolrow button { height: 26px; width: 32px; display: grid; place-items: center; background: #f3eeea; border-radius: 3px; }
.split { display: flex; gap: 1px; }
.toolrow .drop { width: 12px; }
.split .caret { fill: #999; width: 5px; height: 3px; }
.toolrow .expand { width: 26px; margin-left: auto; border: 1px solid var(--line); }
.expand svg { width: 9px; height: 7px; stroke: none; }
.search { display: flex; flex: none; align-items: center; height: 26px; margin: 2px 9px 8px 8px; padding: 0 13px 0 12px; border-radius: 13px; background: #f3eeea; }
.search input { flex: 1; min-width: 0; }
.search ::placeholder { color: #777; }
.search svg { width: 10px; height: 10px; stroke: #999; }
.items { display: flex; flex-direction: column; align-items: flex-start; gap: 3px; padding: 2px 12px; }
.items li { font-size: 13px; line-height: 21px; padding: 0 8px 0 3px; border-radius: 3px; }
.items .sel { background: var(--sel); }

.props { flex: 446 1 0; }
.propwrap { flex: 1; display: flex; min-height: 0; padding-top: 1px; }
.proplist { flex: 1; overflow: hidden; }
.propbar { margin: 12px 4px 37px 5px; }
.prophead { display: grid; grid-template-columns: 101px 1fr; height: 24px; line-height: 24px; text-align: center; background: #ece8e4; border-bottom: 1px solid var(--line); }
.prophead span { border-right: 1px solid var(--line); }
.proplist h3 { display: flex; align-items: center; gap: 7px; height: 24px; margin-bottom: 1px; padding: 1px 0 0 8px; background: #ece8e4; }
.proplist h3 .caret { fill: #888; }
.proplist .shut .caret { transform: rotate(-90deg); }
.row { display: grid; grid-template-columns: 86px 1fr; align-items: center; height: 25px; padding-left: 15px; }
.row > input, .field { width: 100%; height: 21px; min-width: 0; border: 1px solid var(--line); padding: 0 3px; }
.row.key label { color: #1a56f0; }
.row label { white-space: nowrap; }
.row .dim { color: #8c8884; }
.field { display: flex; }
.field svg { width: 12px; height: 12px; margin-top: 2px; }
.field input { flex: 1; min-width: 0; height: 18px; }

/* 3D view */
.view { flex: 1; position: relative; background: #000; overflow: hidden; min-width: 0; }
.scene { width: 100%; height: 100%; }
.face { stroke: none; }
.scene text { stroke: none; font-family: "Noto Sans CJK SC", sans-serif; }
.dims text { font-size: 44px; fill: #007d00; }
.dims .white { fill: #fff; }
.axis path { stroke: #008000; }
.axis text { fill: #fff; font-size: 18px; text-anchor: middle; }
.gizmo { stroke: none; }
.gizmo text { font-size: 15px; text-anchor: middle; }
.ctrl { position: absolute; left: 3px; top: 3px; width: 133px; padding: 9px 11px 11px; background: var(--bg); border-radius: 6px; }
.ctrl h2 { font-size: 14px; line-height: 20px; white-space: nowrap; margin-bottom: 19px; }
.ctrl fieldset { border: 1px solid #ccc8c4; border-radius: 3px; padding: 6px 10px; }
.ctrl label { display: flex; align-items: center; gap: 4px; height: 23px; white-space: nowrap; }
input[type=checkbox] { appearance: none; width: 14px; height: 14px; border: 1px solid #8a8682; border-radius: 2px; display: grid; place-items: center; }
input[type=checkbox]:checked { background: #2a7ad8; border-color: #2a7ad8; }
input[type=checkbox]:checked::before { content: ""; width: 9px; height: 5px; border: solid #fff; border-width: 0 0 2px 2px; transform: translateY(-1px) rotate(-48deg); }
input[type=checkbox]:indeterminate::before { content: ""; width: 10px; height: 10px; background: #9cc6f6; border: 1px solid #3a86e0; }
.handle { position: absolute; top: 376px; width: 16px; height: 61px; background: #4c4b4a; color: #aaa; display: grid; place-items: center; }
.handle svg { width: 6px; height: 10px; }
.handle.left { left: 0; clip-path: polygon(0 0, 85% 7%, 100% 10%, 100% 90%, 85% 94%, 0 100%); }
.handle.right { right: 0; clip-path: polygon(100% 0, 15% 7%, 0 10%, 0 90%, 15% 94%, 100% 100%); }
.viewtools { position: absolute; right: 0; top: 0; width: 33px; padding: 13px 2px 13px 0; display: flex; flex-direction: column; align-items: center; gap: 9px; background: var(--bg); border-radius: 0 0 3px 3px; }
.viewtools button { display: flex; flex-direction: column; align-items: center; gap: 8px; }
.viewtools .menu { margin-bottom: -2px; }
.viewtools .ic { width: 20px; height: 20px; }
.viewtools text { font-size: 8px; font-weight: bold; fill: var(--blue); stroke: none; }
.viewtools hr { width: 23px; border: none; border-top: 1px solid #555; margin: -2px 0; }

/* display settings */
.display { width: 261px; flex: none; }
.display .grip { margin: 0 12px 0 6px; }
.subtabs { display: flex; flex: none; gap: 3px; padding: 2px 2px 0; height: 26px; align-items: flex-end; border-bottom: 1px solid #b8b4b0; }
.subtabs button { height: 22px; width: 60px; background: #dedad6; border-radius: 3px 3px 0 0; color: #555; }
.subtabs .active { height: 24px; width: 62px; background: var(--bg); color: var(--blue); border: 1px solid #b8b4b0; border-bottom: none; margin-bottom: -1px; }
.layers { display: flex; margin: 3px 3px 0; border: 1px solid var(--line); overflow: hidden; }
.layers table { flex: 1; border-collapse: separate; border-spacing: 0; table-layout: fixed; }
.layers th { font-weight: normal; height: 21px; line-height: 20px; border: solid var(--line); border-width: 0 1px 1px 0; }
.layers th:first-child { width: 114px; }
.layers .hl { background: #7fb5ee; color: #fff; font-weight: bold; }
.layers td { height: 21px; border: solid var(--line); border-width: 0 1px 1px 0; }
.layers td input { margin: 0 auto; }
.layers td.cur { outline: 2px solid #807c78; outline-offset: -1px; }
.tree { display: flex; align-items: center; height: 20px; white-space: nowrap; }
.tree i { flex: none; height: 21px; }
.trunk { width: 9px; border-right: 1px solid #e2deda; }
.branch { width: 17px; margin: 0 5px 0 9px; background: linear-gradient(#e2deda, #e2deda) 0 0 / 1px 100% no-repeat, linear-gradient(#e2deda, #e2deda) 0 10px / 17px 1px no-repeat; }
.branch.last { background-size: 1px 11px, 17px 1px; }
.fold { width: 13px; height: 13px; margin: 0 5px 0 3px; border: 1px solid #8a8682; border-radius: 2px; font-size: 11px; line-height: 9px; }
.layerbar { margin: 407px 3px 127px 5px; }
.reset { align-self: flex-end; flex: none; width: 90px; height: 26px; margin: 6px 8px 0 0; border: 1px solid #c4c0bc; border-radius: 3px; }

/* status bar */
.status { display: flex; flex: none; height: 32px; align-items: center; padding-top: 1px; background: #fbf6ef; }
.facts { display: flex; width: 448px; white-space: nowrap; }
.facts span:first-child { margin-left: -2px; }
.num { width: 54px; padding-left: 4px; }
.num.wide { width: 105px; }
.num.count { width: 51px; padding-left: 1px; }
.num:last-child { padding-left: 1px; }
.snap { display: flex; gap: 4px; flex: 1; }
.snap button { display: flex; align-items: center; justify-content: center; gap: 5px; width: 24px; height: 25px; border: 1px solid #a8a4a0; border-radius: 3px; }
.snap .ic { width: 17px; height: 17px; }
.snap .caret { width: 5px; }
.snap .two { width: 35px; }
.snap .on { background: #dae5f4; border-color: #3a82dc; }
.snap .gap { margin-left: 3px; }
.snap .bare { border: none; margin-left: 8px; }
.notes { display: flex; align-items: center; gap: 6px; padding-right: 11px; }
.notes svg { width: 14px; height: 14px; stroke: none; }
.notes span + svg { margin-left: 7px; }
.taskbar { height: 9px; flex: none; border-top: 1px solid #b4b2b0; background: radial-gradient(circle at 34px 12px, #c62a1c 7px, transparent 8px), linear-gradient(#eeeeee, #eeeeee) 1116px 4px / 38px 5px no-repeat, linear-gradient(90deg, #dcdcdc, #d6dce2 17%, #e2d8d8 30%, #d8d8e0 47%, #d6dee4 75%, #dcdcdc 84%, #d6dfe6); }
```

FILE: script.js
```js
// layer table: groups start with "-", the rest hang under the group above
const layers = [
  '楼地面', '踢脚', '墙裙', '墙面', '天棚', '吊顶', '独立柱装修', '单梁装修',
  '-土方', '大开挖土方', '基槽土方', '基坑土方', '大开挖灰...', '基槽灰土...', '基坑灰土...', '房心回填',
  '-基础', '基础梁', '筏板基础', '筏板主筋', '筏板负筋', '基础板带', '集水坑', '柱墩', '独立基础', '条形基础', '桩承台', '桩', '垫层', '地沟', '砖胎膜',
  '-其它', '建筑面积'
];
const shown = ['筏板基础', '筏板主筋', '筏板负筋', '集水坑'];
const body = document.getElementById('layer-rows');

layers.forEach((item, i) => {
  const group = item[0] === '-';
  const name = group ? item.slice(1) : item;
  const last = layers[i + 1] && layers[i + 1][0] === '-';
  const lead = group
    ? '<button class="fold" aria-label="折叠">−</button>'
    : `<i class="branch${last ? ' last' : ''}"></i>`;
  const tr = document.createElement('tr');
  tr.innerHTML = `<td><div class="tree"><i class="trunk"></i>${lead}${name}</div></td>
    <td${name === '筏板基础' ? ' class="cur"' : ''}><input type="checkbox" aria-label="显示图元 ${name}"${shown.includes(name) ? ' checked' : ''}></td>
    <td><input type="checkbox" aria-label="显示名称 ${name}"></td>`;
  if (item === '-基础') tr.querySelector('input').indeterminate = true;
  body.appendChild(tr);
});

function line(target, x1, y1, x2, y2, width) {
  const el = document.createElementNS('http://www.w3.org/2000/svg', 'line');
  el.setAttribute('x1', x1);
  el.setAttribute('y1', y1);
  el.setAttribute('x2', x2);
  el.setAttribute('y2', y2);
  if (width) el.setAttribute('stroke-width', width);
  document.getElementById(target).appendChild(el);
}

// bars running across the slab: x, y at the left end, y at the right edge
[[695, 494, 411], [708, 525, 443], [720, 555, 474], [733, 585, 506], [755, 639, 560], [768, 669, 592], [780, 699, 624]].forEach(([x, y, yr], i) => {
  line('rebar-dim', x, y, 1651, yr);
  line('rebar-lit', x, y, x + 57, y - 5);
  if (i === 0) line('rebar-above', x, y, 1651, yr);
  if (i === 1) line('rebar-gap', x, y, 1651, yr);
});

// bars running front to back
for (let i = 0; i < 9; i++) {
  const x = 911 + i * 66.5, y = 348 - i * 5.8;
  line('rebar-dim', x, y, x + 187.5, y + 450);
  line('rebar-gap', x, y, x + 187.5, y + 450);
  line('rebar-lit', x + 176, y + 422, x + 187.5, y + 450);
}
[[1509, 297, 1651, 638], [1555, 292, 1651, 524], [1602, 288, 1651, 406]].forEach(p => {
  line('rebar-dim', ...p);
  line('rebar-gap', ...p);
});

// vertical bars: x, bottom y, width
const uprights = [[951, 470], [960, 470, 2], [964, 500], [977, 531], [989, 563], [998, 585], [1011, 615], [1025, 645, 6], [1036, 677], [1604, 407], [1647, 624]];
for (let i = 0; i < 9; i++) uprights.push([1049 + i * 66.5, 679 - i * 6]);
for (let i = 0; i < 8; i++) uprights.push([1093 + i * 66.4, 454 - i * 6]);
uprights.forEach(([x, y, w]) => {
  line('rebar-dim', x, 188, x, y, w);
  line('rebar-above', x, 188, x, y, w);
});
```
